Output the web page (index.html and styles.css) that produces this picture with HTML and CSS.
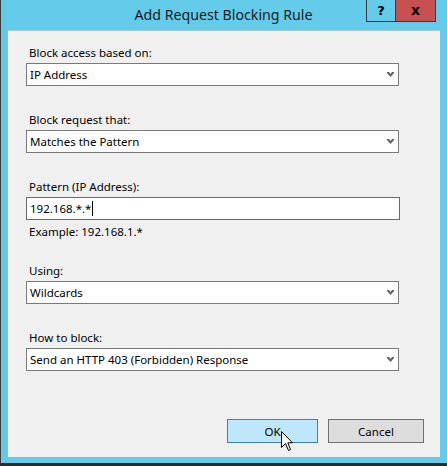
FILE: index.html
```html
<!DOCTYPE html>
<html>
<head>
<meta charset="utf-8">
<link rel="stylesheet" href="styles.css">
</head>
<body>
<div class="window">
  <div class="titlebar">
    <span class="title">Add Request Blocking Rule</span>
    <div class="caption">
      <div class="cap-btn help">?</div>
      <div class="cap-btn close">x</div>
    </div>
  </div>
  <div class="client">
    <div class="field">
      <div class="label">Block access based on:</div>
      <div class="select"><span>IP Address</span><svg class="chev" width="7" height="5" viewBox="0 0 7 5"><path d="M0 0H2L3.5 2L5 0H7V1L3.5 5L0 1Z"/></svg></div>
    </div>
    <div class="field">
      <div class="label">Block request that:</div>
      <div class="select"><span>Matches the Pattern</span><svg class="chev" width="7" height="5" viewBox="0 0 7 5"><path d="M0 0H2L3.5 2L5 0H7V1L3.5 5L0 1Z"/></svg></div>
    </div>
    <div class="field hinted">
      <div class="label">Pattern (IP Address):</div>
      <div class="textbox"><span>192.168.*.*</span><span class="caret"></span></div>
      <div class="hint">Example: 192.168.1.*</div>
    </div>
    <div class="field after-hint">
      <div class="label">Using:</div>
      <div class="select"><span>Wildcards</span><svg class="chev" width="7" height="5" viewBox="0 0 7 5"><path d="M0 0H2L3.5 2L5 0H7V1L3.5 5L0 1Z"/></svg></div>
    </div>
    <div class="field">
      <div class="label">How to block:</div>
      <div class="select"><span>Send an HTTP 403 (Forbidden) Response</span><svg class="chev" width="7" height="5" viewBox="0 0 7 5"><path d="M0 0H2L3.5 2L5 0H7V1L3.5 5L0 1Z"/></svg></div>
    </div>
    <div class="buttons">
      <div class="button ok">OK</div>
      <div class="button cancel">Cancel</div>
    </div>
  </div>
  <svg class="cursor" width="13" height="21" viewBox="0 0 13 21"><path d="M0.5 0.5V16.5L4.5 12.5L7.5 19.5L9.5 18.5L6.8 11.8H11.5Z" fill="#fff" stroke="#000" stroke-width="1"/></svg>
</div>
</body>
</html>
```

FILE: styles.css
```css
html, body {
  margin: 0;
  padding: 0;
}
body {
  width: 447px;
  height: 466px;
  overflow: hidden;
  font-family: "Segoe UI", "Noto Sans", sans-serif;
  font-size: 11.5px;
  color: #000;
}
.window {
  position: relative;
  box-sizing: border-box;
  width: 447px;
  height: 466px;
  background: #65cbea;
  border-left: 1px solid #3a3a3a;
  border-bottom: 3px solid #2b2b2b;
  display: flex;
  flex-direction: column;
}
.titlebar {
  height: 30px;
  flex: none;
  display: flex;
  justify-content: center;
  position: relative;
}
.title {
  font-size: 14.2px;
  line-height: 30px;
  color: #1b1b1b;
  margin-left: -1px;
}
.caption {
  position: absolute;
  top: -1px;
  right: 11px;
  display: flex;
}
.cap-btn {
  box-sizing: border-box;
  height: 23px;
  border: 1px solid #3a3a3a;
  display: flex;
  align-items: center;
  justify-content: center;
  font-weight: bold;
  font-family: "DejaVu Sans", sans-serif;
  font-size: 13px;
  color: #000;
}
.help {
  width: 29px;
  border-right: none;
}
.close {
  width: 41px;
  background: #c75050;
  font-size: 14px;
  padding-bottom: 2px;
}
.client {
  flex: 1;
  margin: 0 7px 6px 7px;
  background: #f0f0f0;
  border-top: 1px solid #9fc9da;
  display: flex;
  flex-direction: column;
  padding: 14px 16px 14px 18px;
}
.field {
  display: flex;
  flex-direction: column;
}
.field + .field {
  margin-top: 26px;
}
.field.after-hint {
  margin-top: 23px;
}
.label {
  line-height: 16px;
  margin-bottom: 2px;
  padding-left: 3px;
}
.select, .textbox {
  box-sizing: border-box;
  width: 373px;
  height: 23px;
  border: 1px solid #7a7a7a;
  background: #fff;
  display: flex;
  align-items: center;
  padding: 0 4px 0 3px;
}
.select {
  justify-content: space-between;
}
.textbox {
  width: 374px;
  border-color: #6a6a6a;
}
.chev {
  fill: #606060;
  flex: none;
}
.caret {
  display: inline-block;
  width: 1px;
  height: 15px;
  background: #000;
  margin-left: 1px;
}
.hint {
  line-height: 16px;
  margin-top: 4px;
  padding-left: 3px;
}
.buttons {
  margin-top: auto;
  display: flex;
  justify-content: flex-end;
  gap: 10px;
}
.button {
  box-sizing: border-box;
  height: 24px;
  display: flex;
  align-items: center;
  justify-content: center;
  border: 1px solid #707070;
}
.ok {
  width: 91px;
  background: #bee6fd;
  border-color: #3c7fb1;
}
.cancel {
  width: 96px;
  background: #dddddd;
}
.cursor {
  position: absolute;
  left: 280px;
  top: 431px;
}
```
